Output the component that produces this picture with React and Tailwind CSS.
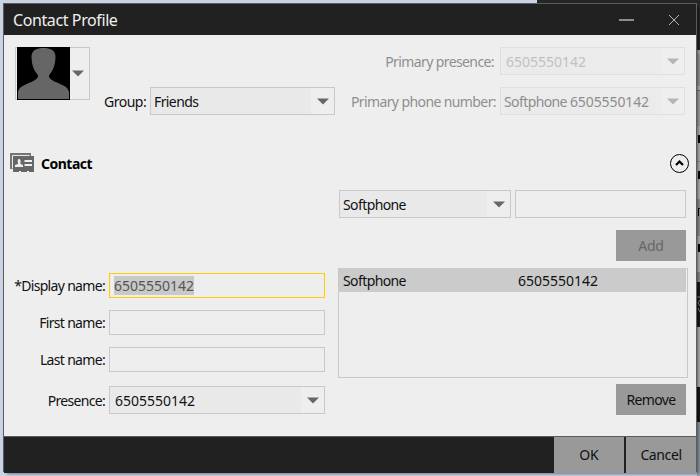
import React from "react";

function Arrow({ dim }) {
  return (
    <svg width="12" height="7" viewBox="0 0 12 7" className={dim ? "text-[#b6b6b6]" : "text-[#676767]"}>
      <path d="M0 .5H12L6 6.5Z" fill="currentColor" />
    </svg>
  );
}

function Combo({ className, text, textClass = "pl-[3px]", dim }) {
  return (
    <div
      className={`flex h-7 shrink-0 items-stretch border ${dim ? "border-[#dfdfdf] bg-[#ebebeb]" : "border-[#c8c8c8] bg-[#e9e9e9]"} ${className}`}
    >
      <div className={`flex-1 whitespace-nowrap leading-[28px] ${textClass}`}>{text}</div>
      <div className="flex w-[23px] items-center justify-center bg-[#eeeeee]">
        <Arrow dim={dim} />
      </div>
    </div>
  );
}

function Field({ label, children, className = "" }) {
  return (
    <div className={`flex items-center ${className}`}>
      <div className="w-[101px] shrink-0 whitespace-nowrap text-right tracking-[-0.68px]">{label}</div>
      <div className="w-1 shrink-0" />
      {children}
    </div>
  );
}

function Backdrop() {
  return (
    <div className="absolute inset-0 flex flex-col bg-[#c9d3e3]">
      <div className="ml-[537px] h-[50px] shrink-0 bg-[#252525]" />
      <div className="ml-auto flex w-[3px] flex-1 flex-col overflow-hidden bg-[#c4c4c4]">
        <div className="h-[4px] bg-[#b8b8b8]" />
        <div className="h-[32px] bg-[#a6a6a6]" />
        <div className="h-[5px] border-b border-[#777] bg-[#c4c4c4]" />
        <div className="h-[35px] bg-[#b0b0b0]" />
        <div className="h-[36px] border-b border-[#999] pl-px pt-[9px]">
          <div className="h-2 border-l-2 border-t-2 border-black" />
        </div>
        <div className="h-[37px] pl-px pt-[9px]">
          <div className="h-2 border-l-2 border-t-2 border-black" />
        </div>
        <div className="h-[37px] bg-[#a0a0a0] pl-px pt-[9px]">
          <div className="h-2 border-l border-t border-black" />
        </div>
        <div className="h-[36px] pl-px pt-[8px]">
          <div className="h-2 border-l-2 border-t-2 border-black" />
        </div>
        <div className="h-[10px] bg-[#999]" />
        <div className="flex h-[45px] items-center bg-[#1c1c1c]">
          <svg width="3" height="18" viewBox="0 0 3 18" fill="none" stroke="#999">
            <path d="M0 1H3M3 4L1 7L3 10M1 12L3 16" />
          </svg>
        </div>
        <div className="h-[60px]" />
        <div className="h-[35px] bg-[#161616]" />
        <div className="flex-1 bg-[#9aa5b3]" />
      </div>
    </div>
  );
}

export default function App() {
  return (
    <div className="relative h-[476px] w-[700px] overflow-hidden text-[14px] text-[#111] font-['Noto_Sans','Open_Sans',sans-serif]">
      <Backdrop />
      <div className="absolute left-[3px] top-[3px] flex h-[469px] w-[694px] flex-col border border-[#5c5c5c] bg-[#eeeeee] shadow-[3px_3px_3px_-1px_rgba(0,0,0,0.45)]">
        <div className="flex h-[31px] shrink-0 items-center bg-[#212121] pl-[9px] text-[#f0f0f0]">
          <span className="text-[16px] leading-[22px] tracking-[-0.4px]">Contact Profile</span>
          <svg width="62" height="12" viewBox="0 0 62 12" className="ml-auto mr-[15px]" fill="none">
            <path d="M0 6H15" stroke="#8d8d8d" strokeWidth="2" />
            <path d="M50 1L60 11M60 1L50 11" stroke="#b5b5b5" strokeWidth="1" />
          </svg>
        </div>

        <div className="flex h-[118px] shrink-0 pl-[11px] pt-3">
          <div className="flex h-[53px] w-[75px] shrink-0 border border-[#c8c8c8] pl-px">
            <svg width="53" height="53" viewBox="0 0 53 53" className="-mt-px shrink-0">
              <path d="M0 0H53V53H0Z" fill="#000" />
              <path d="M1 52V45C2 38 12 37 18 33C21 31 22 29 20 27C16 22 14.500 16 14.500 9C15 3 20 1 26.500 1C33 1 38 3 38.500 9C38.500 16 37 22 33 27C31 29 32 31 35 33C41 37 51 38 52 45V52Z" fill="#666" />
            </svg>
            <div className="flex flex-1 items-center justify-center pr-[3px]">
              <Arrow />
            </div>
          </div>
          <div className="flex w-[595px] flex-col gap-3">
            <div className="flex items-center justify-end">
              <span className="mr-[6px] tracking-[-0.6px] text-[#8e8e8e]">Primary presence:</span>
              <Combo dim className="w-[185px] text-[#c1c1c1]" textClass="pl-[5px]" text="6505550142" />
            </div>
            <div className="flex items-center">
              <span className="ml-[14px] w-[46px] whitespace-nowrap tracking-[-0.5px]">Group:</span>
              <Combo className="w-[185px]" text={<span className="tracking-[-0.6px]">Friends</span>} />
              <span className="ml-auto mr-1 tracking-[-0.6px] text-[#8e8e8e]">Primary phone number:</span>
              <Combo
                dim
                className="w-[185px] text-[#8e8e8e]"
                text={
                  <>
                    <span className="tracking-[-0.6px]">Softphone </span>
                    <span className="tracking-[-0.1px]">6505550142</span>
                  </>
                }
              />
            </div>
          </div>
        </div>

        <div className="flex h-5 shrink-0 items-center pl-[6px] pr-[7px]">
          <svg width="24" height="20" viewBox="0 0 24 20">
            <path d="M0 0H21V16H0Z" fill="#757575" />
            <path d="M2.500 15.500V2.500H19.500" fill="none" stroke="#e8e8e8" />
            <path d="M3 3H24V19H3Z" fill="#676767" />
            <path d="M9 18H11V20H9ZM17 18H19V20H17Z" fill="#eee" />
            <path d="M5 14V12L8 11V10Q7 6 9 6T10.500 10V11L13 12V14ZM14.500 7H22V9H14.500ZM14.500 11H22V13H14.500Z" fill="#eee" />
          </svg>
          <span className="ml-[7px] font-bold tracking-[-0.5px] text-black">Contact</span>
          <svg width="19" height="19" viewBox="0 0 19 19" className="ml-auto" fill="none" stroke="#000">
            <circle cx="9.500" cy="9.500" r="9" />
            <path d="M6 11L9.500 7.500L13 11" strokeWidth="2.200" />
          </svg>
        </div>

        <div className="flex h-[263px] shrink-0 pt-[17px]">
          <div className="w-[321px] shrink-0 pt-[83px]">
            <Field label="*Display name:">
              <div className="flex h-[25px] w-[216px] items-center border border-[#fc0] pl-1">
                <span className="h-[19px] bg-[#c9c9c9] leading-[20px] text-[#555]">6505550142</span>
              </div>
            </Field>
            <Field label="First name:" className="mt-3">
              <div className="h-[25px] w-[216px] border border-[#c8c8c8]" />
            </Field>
            <Field label="Last name:" className="mt-3">
              <div className="h-[25px] w-[216px] border border-[#c8c8c8]" />
            </Field>
            <Field label="Presence:" className="mt-[14px]">
              <Combo className="w-[216px]" textClass="pl-[5px]" text="6505550142" />
            </Field>
          </div>
          <div className="ml-[13px] flex w-[350px] flex-col">
            <div className="flex gap-1 pl-px">
              <Combo className="w-[172px]" text={<span className="tracking-[-0.6px]">Softphone</span>} />
              <div className="h-7 w-[171px] border border-[#c8c8c8]" />
            </div>
            <div className="mr-[2px] mt-3 h-[31px] w-[70px] self-end bg-[#999] text-center leading-[32px] tracking-[-0.3px] text-[#666]">Add</div>
            <div className="mt-[7px] h-[110px] border border-[#c8c8c8]">
              <div className="-mt-px mr-px flex h-6 bg-[#cbcbcb] pl-1 leading-[26px]">
                <span className="w-[175px] tracking-[-0.6px]">Softphone</span>
                <span>6505550142</span>
              </div>
            </div>
            <div className="mr-[2px] mt-[6px] h-[31px] w-[70px] self-end bg-[#999] text-center leading-[32px] tracking-[-0.65px]">Remove</div>
          </div>
        </div>

        <div className="flex flex-1 justify-end gap-[2px] border-t border-[#5c5c5c] bg-[#212121] text-center leading-[36px]">
          <div className="w-[70px] bg-[#999]">OK</div>
          <div className="w-[70px] bg-[#999] tracking-[-0.4px]">Cancel</div>
        </div>
      </div>
    </div>
  );
}
